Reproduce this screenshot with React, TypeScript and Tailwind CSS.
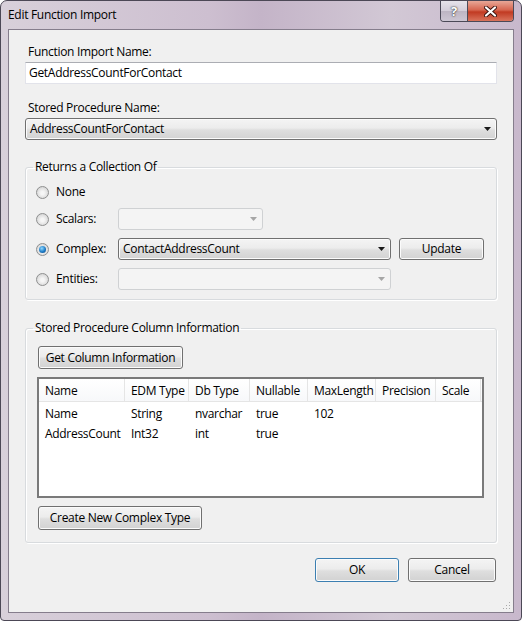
import type { ReactNode } from "react";

const buttonFace =
  "rounded-[3px] border border-[#707070] bg-[linear-gradient(#f4f4f4,#ececec_45%,#dedede_55%,#d2d2d2)] shadow-[inset_0_0_0_1px_#fbfbfb]";

function DropArrow({ disabled = false }: { disabled?: boolean }) {
  return (
    <svg width="7" height="4" viewBox="0 0 7 4" className="shrink-0">
      <path d="M0 0h7L3.5 4z" fill={disabled ? "#a6a6a6" : "#1a1a1a"} />
    </svg>
  );
}

function Combo({ value, disabled = false, className = "" }: { value?: string; disabled?: boolean; className?: string }) {
  return (
    <div
      className={`flex h-[22px] items-center justify-between pl-[4px] pr-[5px] ${
        disabled ? "rounded-[3px] border border-[#cfd1d3] bg-[#f4f4f4]" : buttonFace
      } ${className}`}
    >
      <span className="leading-none">{value}</span>
      <DropArrow disabled={disabled} />
    </div>
  );
}

function Button({ children, className = "" }: { children: ReactNode; className?: string }) {
  return (
    <button type="button" className={`flex items-center justify-center leading-none ${buttonFace} ${className}`}>
      {children}
    </button>
  );
}

function Radio({ checked = false }: { checked?: boolean }) {
  return (
    <span className="flex h-[13px] w-[13px] shrink-0 items-center justify-center rounded-full border border-[#8e8f8f] bg-[radial-gradient(circle_at_50%_55%,#f6f6f6_20%,#d4d4d4_80%)]">
      {checked && (
        <span className="h-[7px] w-[7px] rounded-full bg-[radial-gradient(circle_at_40%_35%,#8fd8ff,#1d7bc6_55%,#0b3f78)]" />
      )}
    </span>
  );
}

function GroupBox({ title, children, className = "" }: { title: string; children: ReactNode; className?: string }) {
  return (
    <fieldset className="rounded-[3px] border border-[#d8dbde] shadow-[inset_1px_1px_0_#fff,1px_1px_0_#fff]">
      <legend className="ml-[7px] px-[2px] leading-[16px]">{title}</legend>
      <div className={className}>{children}</div>
    </fieldset>
  );
}

const columns = ["Name", "EDM Type", "Db Type", "Nullable", "MaxLength", "Precision", "Scale"];
const rows = [
  ["Name", "String", "nvarchar", "true", "102", "", ""],
  ["AddressCount", "Int32", "int", "true", "", "", ""],
];
const gridCols = "grid grid-cols-[86px_64px_61px_58px_68px_60px_45px]";

function ColumnList() {
  return (
    <div className="h-[121px] w-[447px] border-2 border-[#7a7a7a] bg-white">
      <div className={`${gridCols} h-[23px] border-b border-[#e5e5e5] bg-[linear-gradient(#ffffff,#f7f8fa)]`}>
        {columns.map((c) => (
          <div key={c} className="flex items-center overflow-hidden whitespace-nowrap border-r border-[#e5e5e5] pl-[6px] pt-[2px]">
            {c}
          </div>
        ))}
      </div>
      <div className="pt-[2px]">
        {rows.map((r) => (
          <div key={r[0]} className={`${gridCols} h-[20px]`}>
            {r.map((cell, i) => (
              <div key={i} className="flex items-center whitespace-nowrap pl-[6px]">
                {cell}
              </div>
            ))}
          </div>
        ))}
      </div>
    </div>
  );
}

function CaptionButtons() {
  return (
    <div className="flex h-[21px] self-start overflow-hidden rounded-b-[4px] border border-t-0 border-[#4b4957]">
      <div className="flex w-[27px] items-center justify-center border-r border-[#4b4957] bg-[linear-gradient(#e6e3ea,#d3cdd9_50%,#bdb5c3_52%,#cdc6d3)]">
        <span className="text-[13px] font-bold leading-none tracking-normal text-white [text-shadow:0_0_1px_#333,0_0_2px_#333]">?</span>
      </div>
      <div className="flex w-[45px] items-center justify-center bg-[linear-gradient(#e8a797,#d6654f_45%,#c13a22_55%,#d9735c)]">
        <svg width="13" height="11" viewBox="0 0 13 11">
          <path d="M2 1.5l9 8M11 1.5l-9 8" stroke="#3a1410" strokeWidth="4" strokeLinecap="round" />
          <path d="M2 1.5l9 8M11 1.5l-9 8" stroke="#fff" strokeWidth="2.2" strokeLinecap="round" />
        </svg>
      </div>
    </div>
  );
}

export default function App() {
  return (
    <div className="flex h-[621px] w-[522px] flex-col overflow-hidden rounded-t-[7px] rounded-b-[4px] border border-[#4c4856] bg-[linear-gradient(90deg,#d8d0da,#cdbfd0_40%,#c4b4c8_50%,#d2c8d5_75%,#c8b8cc)] font-['Open_Sans',sans-serif] text-[12px] tracking-[-0.3px] text-black">
      <div className="flex h-[28px] items-start justify-between pl-[7px] pr-[7px]">
        <span className="mt-[6px] leading-[16px]">Edit Function Import</span>
        <CaptionButtons />
      </div>

      <div className="relative mx-[7px] mb-[7px] flex flex-1 flex-col border border-[#857d8c] bg-[#f0f0f0] px-[16px] pt-[14px]">
        <label className="pl-[3px] leading-[16px]">Function Import Name:</label>
        <div className="mt-[2px] flex h-[22px] items-center border border-[#e2e3ea] border-t-[#abadb3] bg-white pl-[3px]">
          GetAddressCountForContact
        </div>

        <label className="mt-[16px] pl-[3px] leading-[16px]">Stored Procedure Name:</label>
        <Combo value="AddressCountForContact" className="mt-[2px]" />

        <div className="mt-[19px]">
          <GroupBox title="Returns a Collection Of" className="pl-[10px] pb-[9px]">
            <div className="mt-[6px] flex h-[22px] items-center">
              <Radio />
              <span className="ml-[7px]">None</span>
            </div>
            <div className="mt-[5px] flex h-[22px] items-center">
              <Radio />
              <span className="ml-[7px] w-[62px]">Scalars:</span>
              <Combo disabled className="w-[145px]" />
            </div>
            <div className="mt-[8px] flex h-[22px] items-center">
              <Radio checked />
              <span className="ml-[7px] w-[62px]">Complex:</span>
              <Combo value="ContactAddressCount" className="w-[273px]" />
              <Button className="ml-[8px] h-[22px] w-[85px]">Update</Button>
            </div>
            <div className="mt-[8px] flex h-[22px] items-center">
              <Radio />
              <span className="ml-[7px] w-[62px]">Entities:</span>
              <Combo disabled className="w-[273px]" />
            </div>
          </GroupBox>
        </div>

        <div className="mt-[20px]">
          <GroupBox title="Stored Procedure Column Information" className="pb-[12px] pl-[11px]">
            <Button className="ml-[1px] mt-[10px] h-[23px] w-[145px]">Get Column Information</Button>
            <div className="mt-[8px]">
              <ColumnList />
            </div>
            <Button className="ml-[1px] mt-[8px] h-[24px] w-[164px]">Create New Complex Type</Button>
          </GroupBox>
        </div>

        <div className="mr-[1px] mt-[15px] flex justify-end gap-[9px]">
          <Button className="h-[24px] w-[84px] !border-[#3c7fb1] shadow-[inset_0_0_0_1px_#9edcf8]">OK</Button>
          <Button className="h-[24px] w-[88px]">Cancel</Button>
        </div>

        {/* size grip */}
        <svg width="10" height="10" viewBox="0 0 10 10" className="absolute bottom-[2px] right-[2px]">
          {[
            [8, 2],
            [8, 5],
            [5, 5],
            [8, 8],
            [5, 8],
            [2, 8],
          ].map(([x, y]) => (
            <rect key={`${x}-${y}`} x={x} y={y} width="1" height="1" fill="#a9a9a9" />
          ))}
        </svg>
      </div>
    </div>
  );
}
